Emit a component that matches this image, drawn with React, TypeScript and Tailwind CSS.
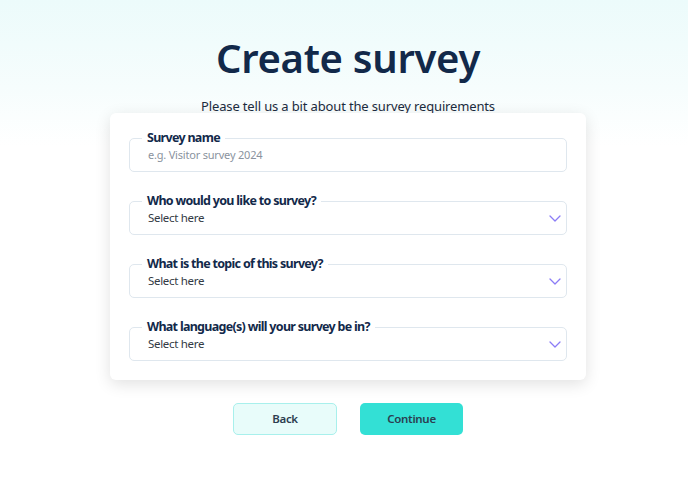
import React from "react";

const Chevron = () => (
  <svg width="12" height="7" viewBox="0 0 12 7" fill="none" className="text-[#8b7cf6]">
    <path d="M1 1L6 6L11 1" stroke="currentColor" strokeWidth="1.3" strokeLinecap="round" strokeLinejoin="round" />
  </svg>
);

function Field({ label, placeholder, select }: { label: string; placeholder: string; select?: boolean }) {
  return (
    <div className="relative h-[34px] rounded-[5px] border border-[#dfe7ee] flex items-center pl-[18px] pr-[5px]">
      <span className="absolute -top-[9px] left-[12px] bg-white px-[5px] text-[12.5px] font-bold leading-[16px] tracking-[-0.7px] text-[#12294a]">
        {label}
      </span>
      <span
        className={`flex-1 ${
          select ? "text-[11.5px] tracking-[-0.3px] text-[#333a44]" : "text-[11px] tracking-[-0.2px] text-[#8a939e]"
        }`}
      >
        {placeholder}
      </span>
      {select && (
        <span className="flex items-center">
          <Chevron />
        </span>
      )}
    </div>
  );
}

export default function App() {
  return (
    <div
      className="w-[688px] h-[487px] bg-[linear-gradient(to_bottom,#ecfbfb_0%,#f6fdfd_18%,#ffffff_30%)] flex flex-col items-center pl-[8px]"
      style={{ fontFamily: '"Noto Sans", "Open Sans", sans-serif' }}
    >
      <h1 className="mt-[32px] text-[40px] font-semibold leading-[52px] text-[#12294a] tracking-[-0.3px]">Create survey</h1>
      <p className="mt-[12px] text-[13px] leading-[20px] tracking-[-0.15px] text-[#1c2c40]">
        Please tell us a bit about the survey requirements
      </p>
      <div className="mt-[-3px] w-[476px] rounded-[6px] bg-white shadow-[0_4px_16px_rgba(0,0,0,0.12)] px-[19px] pt-[25px] pb-[19px] flex flex-col gap-[29px]">
        <Field label="Survey name" placeholder="e.g. Visitor survey 2024" />
        <Field label="Who would you like to survey?" placeholder="Select here" select />
        <Field label="What is the topic of this survey?" placeholder="Select here" select />
        <Field label="What language(s) will your survey be in?" placeholder="Select here" select />
      </div>
      <div className="mt-[23px] flex gap-[23px]">
        <button className="w-[104px] h-[32px] rounded-[5px] border border-[#a8f0ec] bg-[#e8fcfa] text-[11.5px] font-semibold tracking-[-0.3px] text-[#2c3e50]">
          Back
        </button>
        <button className="w-[103px] h-[32px] rounded-[5px] bg-[#33e0d5] text-[11.5px] font-semibold tracking-[-0.3px] text-[#2c3e50]">
          Continue
        </button>
      </div>
    </div>
  );
}
